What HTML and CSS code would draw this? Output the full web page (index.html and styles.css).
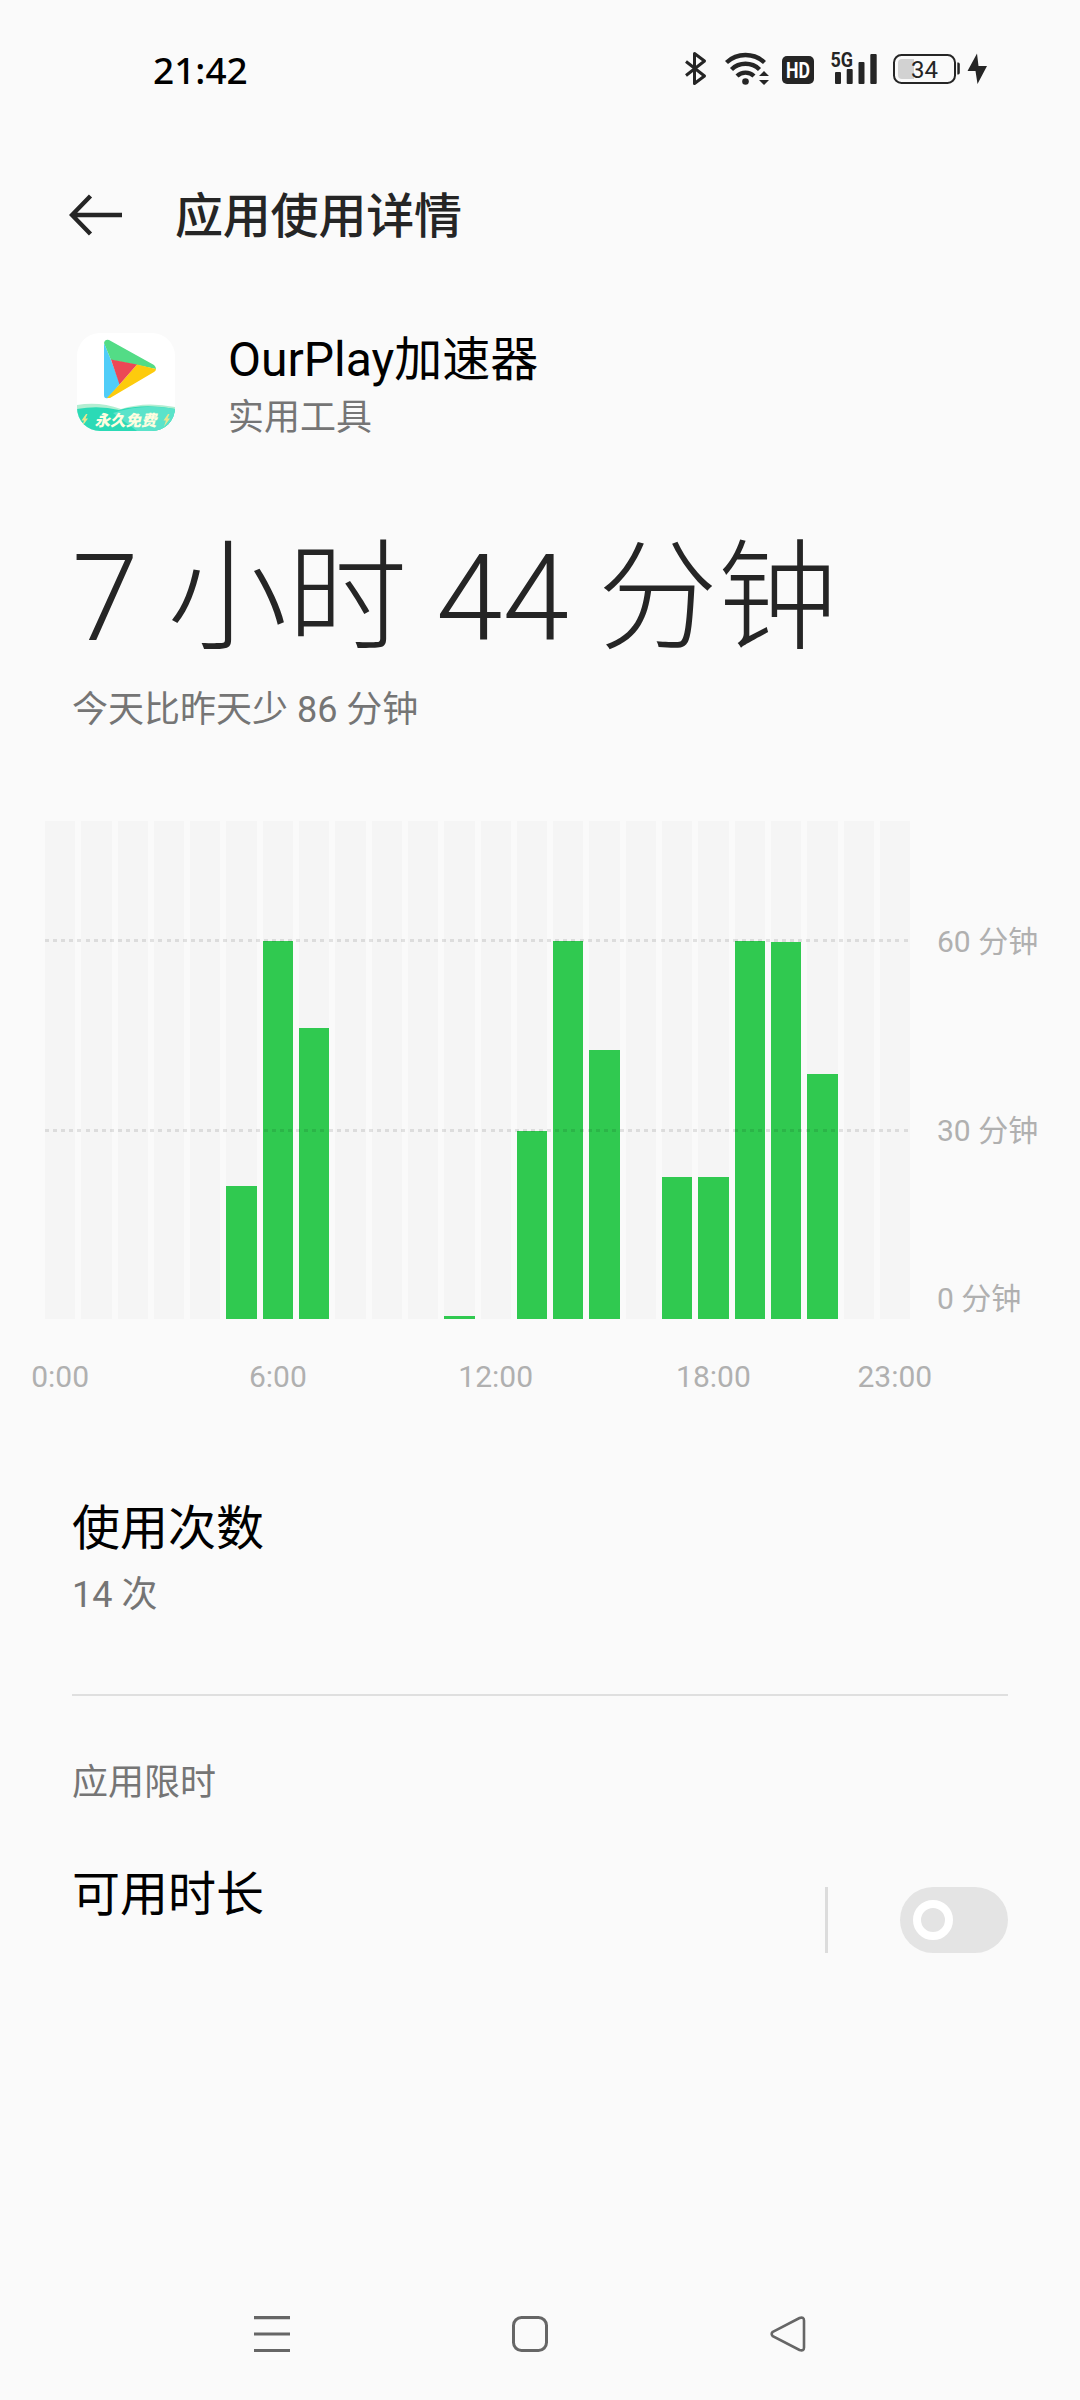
FILE: index.html
```html
<!DOCTYPE html>
<html lang="zh-CN">
<head>
<meta charset="UTF-8">
<meta name="viewport" content="width=device-width, initial-scale=1.0">
<title>应用使用详情</title>
<link rel="stylesheet" href="styles.css">
</head>
<body>

<!-- Status bar -->
<div class="status-bar">
    <div class="clock">21:42</div>
    <svg class="status-icons" width="306" height="40" viewBox="682 48 306 40">
        <!-- bluetooth -->
        <path d="M686 61.5 L704.500 76 L694.500 83.500 V53.500 L704.500 61 L686 75.500" fill="none" stroke="#252525" stroke-width="3" stroke-linejoin="round"/>
        <!-- wifi -->
        <g fill="none" stroke="#252525" stroke-width="4.400">
            <path d="M726.500 62.500 A28 28 0 0 1 764.500 62.500"/>
            <path d="M731.500 69.500 A20 20 0 0 1 759.500 69.500"/>
            <path d="M737 76 A12.500 12.500 0 0 1 754 76"/>
        </g>
        <circle cx="745.500" cy="81.500" r="3.300" fill="#252525"/>
        <path d="M759 76 L764 71 L769 76 Z M759 80 L764 85 L769 80 Z" fill="#252525"/>
        <!-- HD -->
        <rect x="782" y="56" width="32" height="28" rx="5" fill="#252525"/>
        <text class="hd" x="798" y="78" textLength="24" lengthAdjust="spacingAndGlyphs">HD</text>
        <!-- signal -->
        <text class="net" x="830.500" y="67" textLength="22.500" lengthAdjust="spacingAndGlyphs">5G</text>
        <g fill="#252525">
            <rect x="835" y="72" width="6" height="12" rx="1"/>
            <rect x="846.700" y="69" width="6" height="15" rx="1"/>
            <rect x="858.500" y="62" width="6" height="22" rx="1"/>
            <rect x="870.300" y="54" width="6.400" height="30" rx="1"/>
        </g>
        <!-- battery -->
        <rect x="894" y="55" width="61" height="28" rx="7.500" fill="none" stroke="#252525" stroke-width="2"/>
        <path d="M914 59 V79 H902 a4 4 0 0 1 -4 -4 V63 a4 4 0 0 1 4 -4 Z" fill="#d2d2d2"/>
        <text class="level" x="924.500" y="78">34</text>
        <path d="M957.300 62.500 h1 q1.500 0 1.500 2 v8 q0 2 -1.500 2 h-1 Z" fill="#252525"/>
        <path d="M977 53.500 L967.500 71 H975.500 L977.500 84 L987 66 H978.500 Z" fill="#252525"/>
    </svg>
</div>

<div class="title-bar">
    <svg width="54" height="42" viewBox="0 0 54 42">
        <path d="M21.500 2 L3 21 L21.500 40 M3 21 H53" fill="none" stroke="#252525" stroke-width="4.400"/>
    </svg>
    <h1>应用使用详情</h1>
</div>

<div class="app">
    <svg class="app-icon" width="98" height="98" viewBox="0 0 98 98">
        <clipPath id="tile"><rect width="98" height="98" rx="23"/></clipPath>
        <g clip-path="url(#tile)">
            <rect width="98" height="98" fill="#fff"/>
            <path d="M27 10 V62 Q27 66 31 65 L43 51 L34 27 Z" fill="#50cdf8"/>
            <path d="M27 10 Q28 6 32 7 L77 32 Q79 34 79 36 L60 32 L34 27 Z" fill="#53dc86"/>
            <path d="M79 36 Q79 38 77 39 L33 65 L30 65 L43 51 L60 31.500 Z" fill="#fdcb0d"/>
            <path d="M34 26.500 L60 31.500 L42.500 51.500 Z" fill="#ec4755"/>
            <path d="M0 72 Q22 68 44 76 Q68 68 98 74 V98 H0 Z" fill="#b3eed2"/>
            <path d="M0 76 Q22 72 42 77 Q68 70 98 76 V98 H0 Z" fill="#2bdab6"/>
            <path d="M36 80 Q66 70 98 76 V98 H60 Z" fill="#5be3ca"/>
            <path d="M9 81 L4.500 87.500 h2.500 l-2 6 l6 -8 h-2.500 l2 -4.500 Z M91 81 L86.500 87.500 h2.500 l-2 6 l6 -8 h-2.500 l2 -4.500 Z" fill="#e9e58f"/>
            <text class="badge" x="48.500" y="92.500">永久免费</text>
        </g>
    </svg>
    <div>
        <div class="item-title">OurPlay加速器</div>
        <div class="item-sub">实用工具</div>
    </div>
</div>

<div class="total">7 小时 44 分钟</div>
<div class="compare">今天比昨天少 86 分钟</div>

<!-- Hourly usage, one column per hour -->
<div class="chart">
    <div class="plot">
        <div class="col"></div>
        <div class="col"></div>
        <div class="col"></div>
        <div class="col"></div>
        <div class="col"></div>
        <div class="col"><div class="bar" style="height: 132.600px"></div></div>
        <div class="col"><div class="bar" style="height: 378px"></div></div>
        <div class="col"><div class="bar" style="height: 291.500px"></div></div>
        <div class="col"></div>
        <div class="col"></div>
        <div class="col"></div>
        <div class="col"><div class="bar" style="height: 3px"></div></div>
        <div class="col"></div>
        <div class="col"><div class="bar" style="height: 188px"></div></div>
        <div class="col"><div class="bar" style="height: 378px"></div></div>
        <div class="col"><div class="bar" style="height: 269px"></div></div>
        <div class="col"></div>
        <div class="col"><div class="bar" style="height: 142px"></div></div>
        <div class="col"><div class="bar" style="height: 142px"></div></div>
        <div class="col"><div class="bar" style="height: 378px"></div></div>
        <div class="col"><div class="bar" style="height: 377px"></div></div>
        <div class="col"><div class="bar" style="height: 245.500px"></div></div>
        <div class="col"></div>
        <div class="col"></div>
        <div class="grid-line line-60"></div>
        <div class="grid-line line-30"></div>
    </div>
    <div class="y-axis">
        <div>60 分钟</div>
        <div>30 分钟</div>
        <div>0 分钟</div>
    </div>
</div>
<div class="x-axis">
    <div class="tick tick-0">0:00</div>
    <div class="tick tick-6">6:00</div>
    <div class="tick tick-12">12:00</div>
    <div class="tick tick-18">18:00</div>
    <div class="tick tick-23">23:00</div>
</div>

<div class="count">
    <div class="item-title">使用次数</div>
    <div class="item-sub">14 次</div>
</div>

<div class="section-title">应用限时</div>
<div class="limit">
    <div class="item-title">可用时长</div>
    <div class="separator"></div>
    <div class="toggle"><div class="knob"></div></div>
</div>

<!-- System navigation -->
<div class="nav-bar">
    <svg width="36" height="36" viewBox="0 0 36 36">
        <path d="M0 1.700 H36 M0 18 H36 M0 34.500 H36" stroke="#666" stroke-width="3.200"/>
    </svg>
    <svg width="36" height="36" viewBox="0 0 36 36">
        <rect x="1.500" y="1.500" width="33" height="33" rx="8" fill="none" stroke="#666" stroke-width="3"/>
    </svg>
    <svg width="36" height="36" viewBox="0 0 36 36">
        <path d="M2.800 15.800 L29.500 2 Q34 0.500 34 4.500 V31.500 Q34 35.500 29.500 34 L2.800 20.200 Q0.500 18 2.800 15.800 Z" fill="none" stroke="#666" stroke-width="2.600"/>
    </svg>
</div>

</body>
</html>
```
FILE: styles.css
```css
* { box-sizing: border-box; }
body {
    margin: 0;
    width: 1080px;
    height: 2400px;
    display: flex;
    flex-direction: column;
    background: #fafafa;
    color: #000;
    font-family: Roboto, "Noto Sans CJK SC", sans-serif;
    overflow: hidden;
}
svg { display: block; flex-shrink: 0; }

.status-bar {
    height: 140px;
    padding: 48px 92px 0 153px;
    display: flex;
    justify-content: space-between;
}
.clock { font-family: "Noto Sans", sans-serif; font-size: 37px; font-weight: 500; line-height: 43px; }
.hd { font: bold 22px Roboto, sans-serif; fill: #fff; text-anchor: middle; }
.net { font: bold 20px Roboto, sans-serif; fill: #252525; }
.level { font: 24px Roboto, sans-serif; fill: #252525; text-anchor: middle; }

.title-bar {
    height: 150px;
    padding-left: 69px;
    display: flex;
    align-items: center;
    gap: 52px;
}
h1 {
    margin: 0;
    padding-top: 4px;
    font-size: 48px;
    font-weight: 500;
    line-height: 60px;
    letter-spacing: -0.2px;
    color: #252525;
}

.app { height: 208px; padding: 43px 77px 0; display: flex; gap: 53px; }
.badge {
    font: italic 900 15.500px "Noto Sans CJK SC", sans-serif;
    fill: #fffde0;
    text-anchor: middle;
}
.item-title { font-size: 48px; line-height: 56px; }
.item-sub { font-size: 36px; line-height: 44px; color: #757575; }
.app .item-title { margin-top: -1px; }
.app .item-sub { margin-top: 8px; }

.total {
    height: 180px;
    padding-left: 72px;
    font-size: 120px;
    line-height: 202px;
    font-weight: 300;
    letter-spacing: -0.2px;
    color: #252525;
}
.compare { height: 143px; padding: 10px 72px; font-size: 36px; line-height: 44px; color: #757575; }

.chart { height: 498px; display: flex; padding-left: 45px; }
.plot { position: relative; width: 865px; display: flex; gap: 6px; }
.col { flex: 1; display: flex; align-items: flex-end; background: #f5f5f5; }
.bar { width: 100%; background: #30c950; }
.grid-line {
    position: absolute;
    left: 0;
    right: 0;
    height: 3px;
    background: repeating-linear-gradient(to right, rgba(0, 0, 0, 0.1) 0 4px, transparent 4px 8.100px);
}
.line-60 { top: 118px; }
.line-30 { top: 308px; }
.y-axis {
    padding: 103px 0 0 27px;
    font-size: 30px;
    line-height: 36px;
    color: #b0b0b0;
}
.y-axis div + div { margin-top: 153px; }
.y-axis div:last-child { margin-top: 132px; }

/* same 24 columns as the plot, labels centered under their hour */
.x-axis {
    width: 865px;
    height: 175px;
    margin-left: 45px;
    padding-top: 40px;
    display: grid;
    grid-template-columns: repeat(24, minmax(0, 1fr));
    column-gap: 6px;
    font-size: 30px;
    line-height: 36px;
    color: #b0b0b0;
}
.tick { justify-self: center; white-space: nowrap; }
.tick-0 { grid-column: 1; }
.tick-6 { grid-column: 7; }
.tick-12 { grid-column: 13; }
.tick-18 { grid-column: 19; }
.tick-23 { grid-column: 24; }

.count { height: 202px; margin: 0 72px; padding-top: 7px; border-bottom: 2px solid #dfdfdf; }
.count .item-sub { margin-top: 16px; }
.section-title { height: 171px; padding: 65px 72px 0; font-size: 36px; line-height: 44px; color: #757575; }
.limit { height: 439px; padding: 0 72px; display: flex; }
.limit .item-title { flex: 1; }
.separator { width: 3px; height: 66px; margin: 20px 72px 0 0; background: #dcdcdc; }
.toggle { width: 108px; height: 66px; margin-top: 20px; padding: 13px; border-radius: 33px; background: #e4e4e4; }
.knob { width: 40px; height: 40px; border: 8px solid #fff; border-radius: 50%; }

.nav-bar { display: flex; gap: 222px; padding: 10px 254px; }
```
